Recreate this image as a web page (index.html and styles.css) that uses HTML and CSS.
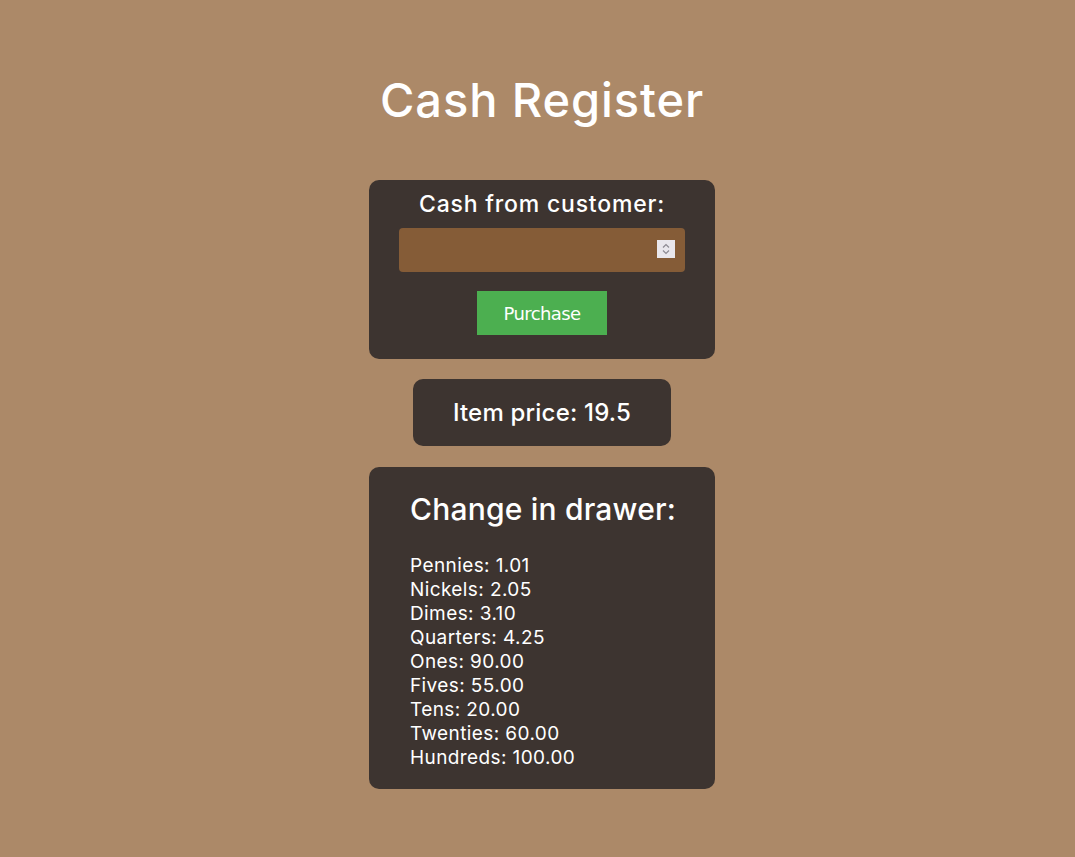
FILE: index.html
```html
<!DOCTYPE html>
<html lang="en">
<head>
<meta charset="utf-8">
<title>Cash Register</title>
<link rel="stylesheet" href="styles.css">
</head>
<body>
<main class="page">
  <h1 class="title">Cash Register</h1>
  <section class="card input-card">
    <label class="label" for="cash">Cash from customer:</label>
    <div class="input-wrap">
      <input id="cash" class="cash-input" type="text">
      <span class="spinner">
        <svg width="18" height="18" viewBox="0 0 18 18"><rect width="18" height="18" fill="#e9e7ec"/><path d="M6 7.5 9 4.5 12 7.5" fill="none" stroke="#8c8a92" stroke-width="1.2"/><path d="M6 10.5 9 13.5 12 10.5" fill="none" stroke="#8c8a92" stroke-width="1.2"/></svg>
      </span>
    </div>
    <button class="purchase" type="button">Purchase</button>
  </section>
  <section class="card price-card">Item price: 19.5</section>
  <section class="card drawer-card">
    <h2 class="drawer-title">Change in drawer:</h2>
    <ul class="drawer-list">
      <li>Pennies: 1.01</li>
      <li>Nickels: 2.05</li>
      <li>Dimes: 3.10</li>
      <li>Quarters: 4.25</li>
      <li>Ones: 90.00</li>
      <li>Fives: 55.00</li>
      <li>Tens: 20.00</li>
      <li>Twenties: 60.00</li>
      <li>Hundreds: 100.00</li>
    </ul>
  </section>
</main>
</body>
</html>
```
FILE: styles.css
```css
* { box-sizing: border-box; }
html, body { margin: 0; padding: 0; }
body {
  background: #ac8968;
  color: #ffffff;
  font-family: Inter, "Noto Sans", sans-serif;
  min-height: 857px;
}
.page {
  display: flex;
  flex-direction: column;
  align-items: center;
  padding-top: 72px;
  padding-left: 9px;
}
.title {
  margin: 0 0 52px;
  font-size: 47px;
  font-weight: 500;
  line-height: 56px;
  letter-spacing: 0.9px;
}
.card {
  background: #3d3430;
  border-radius: 10px;
}
.input-card {
  width: 346px;
  padding: 10px 30px 24px;
  display: flex;
  flex-direction: column;
  align-items: center;
}
.label {
  font-size: 23px;
  line-height: 28px;
  font-weight: 500;
  letter-spacing: 0.8px;
}
.input-wrap {
  position: relative;
  width: 286px;
  margin-top: 10px;
}
.cash-input {
  display: block;
  width: 100%;
  height: 44px;
  border: none;
  border-radius: 4px;
  background: #855c37;
  outline: none;
}
.spinner {
  position: absolute;
  right: 10px;
  top: 12px;
  width: 18px;
  height: 18px;
  display: block;
}
.spinner svg { display: block; }
.purchase {
  margin-top: 19px;
  width: 130px;
  height: 44px;
  border: none;
  background: #4caf50;
  color: #fff;
  font-family: "DejaVu Sans", Verdana, sans-serif;
  font-size: 18px;
  letter-spacing: -0.6px;
  padding: 0;
}
.price-card {
  margin-top: 20px;
  width: 258px;
  height: 67px;
  display: flex;
  align-items: center;
  justify-content: center;
  font-size: 24px;
  font-weight: 500;
  letter-spacing: 0.2px;
}
.drawer-card {
  margin-top: 21px;
  width: 346px;
  padding: 23px 41px 19px;
}
.drawer-title {
  margin: 0 0 26px;
  font-size: 30px;
  font-weight: 500;
  line-height: 38px;
  letter-spacing: 0.2px;
  white-space: nowrap;
}
.drawer-list {
  list-style: none;
  margin: 0;
  padding: 0;
  font-size: 19px;
  line-height: 24px;
  letter-spacing: 0.4px;
}
```
